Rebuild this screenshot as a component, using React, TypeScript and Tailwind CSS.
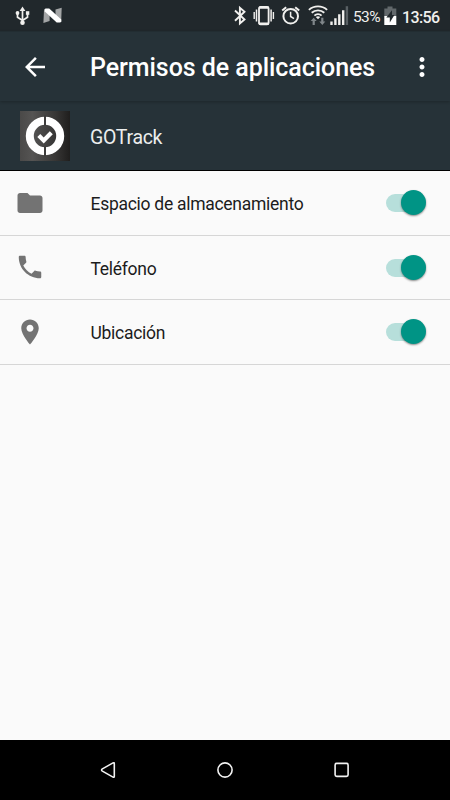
import type { ReactNode } from 'react';

interface Permission {
  label: string;
  path: string;
}

const PERMISSIONS: Permission[] = [
  {
    label: 'Espacio de almacenamiento',
    path: 'M10 4H4c-1.1 0-1.99.9-1.99 2L2 18c0 1.1.9 2 2 2h16c1.1 0 2-.9 2-2V8c0-1.1-.9-2-2-2h-8l-2-2z',
  },
  {
    label: 'Teléfono',
    path: 'M6.62 10.79c1.44 2.83 3.76 5.14 6.59 6.59l2.2-2.2c.27-.27.67-.36 1.02-.24 1.12.37 2.33.57 3.57.57.55 0 1 .45 1 1V20c0 .55-.45 1-1 1-9.39 0-17-7.61-17-17 0-.55.45-1 1-1h3.5c.55 0 1 .45 1 1 0 1.25.2 2.45.57 3.57.11.35.03.74-.25 1.02l-2.2 2.2z',
  },
  {
    label: 'Ubicación',
    path: 'M12 2C8.13 2 5 5.13 5 9c0 5.25 7 13 7 13s7-7.75 7-13c0-3.87-3.13-7-7-7zm0 9.8c-1.55 0-2.8-1.25-2.8-2.8s1.25-2.8 2.8-2.8 2.8 1.25 2.8 2.8-1.25 2.8-2.8 2.8z',
  },
];

function StatusIcon({ width, className, children }: { width: number; className?: string; children: ReactNode }) {
  return (
    <svg width={width} height={31} viewBox={`0 0 ${width} 31`} fill="none" className={`shrink-0 ${className ?? ''}`}>
      {children}
    </svg>
  );
}

function StatusBar() {
  return (
    <div className="flex h-[31px] items-center bg-[#21282c] pl-[15px] pr-[9px] text-[#f1f0ee]">
      {/* USB */}
      <StatusIcon width={15}>
        <path d="M7.5 9v13M2.5 13v4.2l5 3.3 5-3.3V13" stroke="currentColor" strokeWidth="1.7" />
        <path d="M7.5 6.5l2.9 4.5H4.6z" fill="currentColor" />
        <circle cx="7.5" cy="22.7" r="2.3" fill="currentColor" />
        <circle cx="2.5" cy="13" r="1.9" fill="currentColor" />
        <path d="M10.9 11.2h3.4v3.6h-3.4z" fill="currentColor" />
      </StatusIcon>
      {/* Nougat */}
      <StatusIcon width={19} className="ml-[13px]">
        <path d="M1 10l5.6 5v6L.4 23zM12.5 9.6l6.2-1.8-.5 13.2-5.7-5z" fill="#a3a5a6" />
        <path d="M1.5 9.4q.3-1 1.5-1h3.2L18.3 19.4v1.8q-.3 1.2-1.6 1.2h-3L1.5 11.2z" fill="#fff" />
      </StatusIcon>

      <div className="ml-auto flex items-center">
        {/* Bluetooth */}
        <StatusIcon width={12}>
          <path d="M1 10.5l9.5 9-4.6 4V7.8l4.6 4-9.5 9" stroke="currentColor" strokeWidth="1.9" />
        </StatusIcon>
        {/* Vibrate */}
        <StatusIcon width={22} className="ml-[7px]">
          <rect x="6" y="7" width="9.6" height="17.4" rx="1.5" stroke="currentColor" strokeWidth="1.8" />
          <path d="M6 7.6h9.6M6 23.8h9.6" stroke="currentColor" strokeWidth="2.4" />
          <path d="M3.5 9.5v12M18.1 9.5v12" stroke="currentColor" strokeWidth="1.5" />
          <path d="M1.2 12v7M20.4 12v7" stroke="currentColor" strokeWidth="1.4" />
        </StatusIcon>
        {/* Alarm */}
        <StatusIcon width={20} className="ml-[6px]">
          <circle cx="9.7" cy="16.2" r="7.3" stroke="currentColor" strokeWidth="2" />
          <path d="M1.2 10.6l4-3.4M18.2 10.6l-4-3.4" stroke="currentColor" strokeWidth="2" />
          <path d="M9.6 11.7v4.8l3.4 2.2" stroke="currentColor" strokeWidth="1.5" />
        </StatusIcon>
        {/* Wifi with traffic arrows */}
        <StatusIcon width={20} className="ml-[7px]">
          <path d="M.9 9.9a13.5 13.5 0 0 1 18.2 0M3.7 12.8a9.4 9.4 0 0 1 12.6 0M6.4 15.6a5.3 5.3 0 0 1 7.2 0" stroke="currentColor" strokeWidth="1.9" />
          <path d="M7.8 17q2.2-1.6 4.4 0L10 19.3z" fill="currentColor" />
          <path d="M5.7 17.7l3 3.4H6.8v3.8H4.6v-3.8H2.7zM14.3 24.9l-3-3.4h1.9v-3.8h2.2v3.8h1.9z" fill="#80868a" />
        </StatusIcon>
        {/* Signal */}
        <StatusIcon width={19} className="ml-[2px]">
          <path d="M.3 21.5h2.4V25H.3zM4.2 18.2h2.4V25H4.2zM8.1 14.2h2.4V25H8.1zM12 10.2h2.4V25H12z" fill="currentColor" />
          <path d="M15.7 6.2h2.4V25h-2.4z" fill="#596064" />
        </StatusIcon>
        <span className="ml-[4px] w-[28px] whitespace-nowrap text-[15.5px] leading-[31px] tracking-[-0.6px]">
          <span className="relative top-[2px]">53%</span>
        </span>
        {/* Battery */}
        <StatusIcon width={13} className="ml-[3px]">
          <path d="M3.5 6.5h5V8.6h3.8V16H.3V8.6h3.2z" fill="#62686b" />
          <path d="M.3 16h12v9H.3z" fill="#fff" />
          <path d="M8 10.2L2.3 17.4h3.5v5L10.4 15H8z" fill="#21282c" />
        </StatusIcon>
        <span className="ml-[5px] w-[39px] whitespace-nowrap text-[16px] font-medium leading-[31px] tracking-[-0.6px]">
          <span className="relative top-[2px]">13:56</span>
        </span>
      </div>
    </div>
  );
}

function Toolbar() {
  return (
    <header className="relative flex h-[70px] items-center border-t border-[#222d32] bg-[#263238] text-white shadow-[0_1px_3px_rgba(0,0,0,0.25)]">
      <svg width="30" height="30" viewBox="0 0 24 24" fill="currentColor" className="ml-5">
        <path d="M20 11H7.83l5.59-5.59L12 4l-8 8 8 8 1.41-1.41L7.83 13H20v-2z" />
      </svg>
      <h1 className="ml-10 w-[300px] whitespace-nowrap pt-0.5 text-[25px] font-medium tracking-[-0.06px]">
        Permisos de aplicaciones
      </h1>
      <svg width="30" height="30" viewBox="0 0 24 24" fill="currentColor" className="ml-[17px]">
        <path d="M12 8c1.1 0 2-.9 2-2s-.9-2-2-2-2 .9-2 2 .9 2 2 2zm0 2c-1.1 0-2 .9-2 2s.9 2 2 2 2-.9 2-2-.9-2-2-2zm0 6c-1.1 0-2 .9-2 2s.9 2 2 2 2-.9 2-2-.9-2-2-2z" />
      </svg>
    </header>
  );
}

function AppLogo() {
  return (
    <svg width="50" height="50" viewBox="0 0 50 50">
      <defs>
        <linearGradient id="logo-bg" x1="0" x2="1" y1="0" y2="0">
          <stop offset="0" stopColor="#4a4948" />
          <stop offset=".25" stopColor="#555453" />
          <stop offset=".7" stopColor="#383736" />
          <stop offset="1" stopColor="#1f1e1d" />
        </linearGradient>
      </defs>
      <path d="M0 0h50v50H0z" fill="url(#logo-bg)" />
      <circle cx="25" cy="25" r="15.2" fill="none" stroke="#fff" strokeWidth="8" />
      <path d="M25 4.5v10M25 35.5v10" stroke="#3d3c3b" strokeWidth="2" />
      <path d="M18.8 24.6l4.9 4.9 7.6-7.8" fill="none" stroke="#fff" strokeWidth="4.2" />
    </svg>
  );
}

function Toggle() {
  return (
    <div className="relative h-[25px] w-[40px]">
      <div className="absolute left-0 top-1 h-[18px] w-[34px] rounded-full bg-[#b7dfdb]" />
      <div className="absolute right-0 top-0 size-[25px] rounded-full bg-[#009485] shadow-[0_1px_2px_rgba(0,0,0,0.45)]" />
    </div>
  );
}

export default function App() {
  return (
    <div className="flex h-[800px] w-[450px] flex-col overflow-hidden bg-[#fafafa] font-['Roboto',sans-serif]">
      <StatusBar />
      <Toolbar />

      <div className="flex h-[70px] items-center border-b border-black bg-[#263238] pl-5">
        <AppLogo />
        <span className="ml-5 pt-[4px] text-[19.5px] tracking-[-0.3px] text-[#eceeee]">GOTrack</span>
      </div>

      <ul className="flex-1">
        {PERMISSIONS.map((p) => (
          <li key={p.label} className="flex h-[64.5px] items-center border-b border-[#d6d6d6] pl-[15.25px] pr-[24.5px]">
            <svg width="30" height="30" viewBox="0 0 24 24" fill="#737373">
              <path d={p.path} />
            </svg>
            <span className="ml-[45.25px] flex-1 pt-[3px] text-[17.5px] tracking-[-0.28px] text-[#1c1c1c]">{p.label}</span>
            <Toggle />
          </li>
        ))}
      </ul>

      {/* Navigation bar */}
      <nav className="flex h-[60px] items-center justify-between bg-black px-[99px] text-[#f2f2f2]">
        <svg width="18" height="18" viewBox="0 0 18 18" fill="none" stroke="currentColor" strokeWidth="1.6">
          <path d="M3.4 7.9L14 1.9q1.3-.6 1.3.8v12.6q0 1.4-1.3.8L3.4 10.1q-1.7-1.1 0-2.2z" />
        </svg>
        <svg width="18" height="18" viewBox="0 0 18 18" fill="none" stroke="currentColor" strokeWidth="1.6">
          <circle cx="9" cy="9" r="7.1" />
        </svg>
        <svg width="18" height="18" viewBox="0 0 18 18" fill="none" stroke="currentColor" strokeWidth="1.6">
          <rect x="2.1" y="2.4" width="13" height="13" rx="1.6" />
        </svg>
      </nav>
    </div>
  );
}
